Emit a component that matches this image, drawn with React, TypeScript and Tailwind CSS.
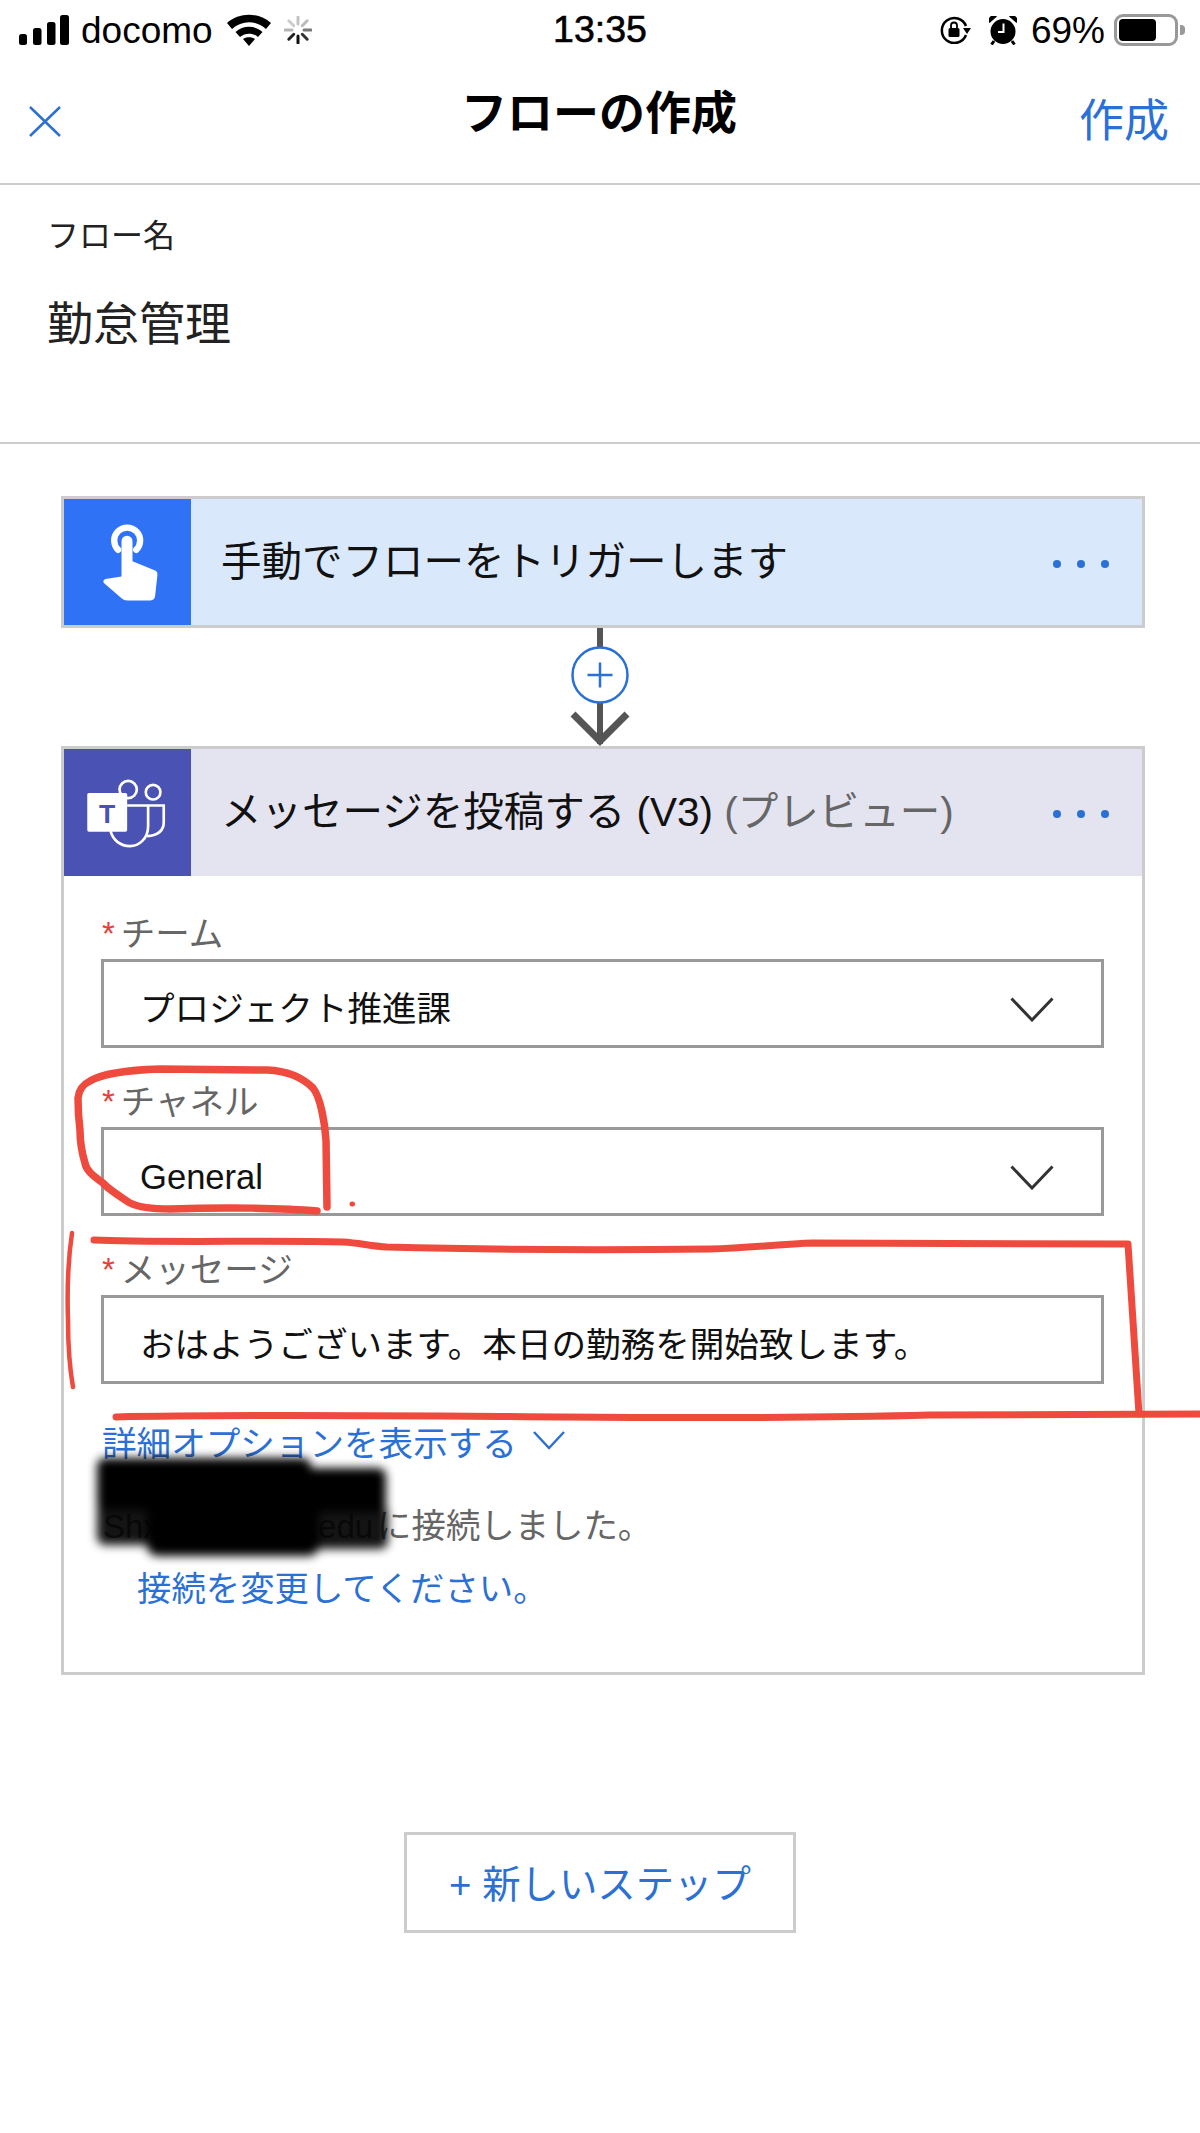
import type { ReactNode } from "react";

function Signal() {
  return (
    <svg width="50" height="31" viewBox="0 0 50 31" className="shrink-0">
      <rect x="0" y="19" width="8" height="11" rx="2.5" fill="#000" />
      <rect x="14" y="13" width="8.5" height="17" rx="2.5" fill="#000" />
      <rect x="28" y="7" width="8.5" height="23" rx="2.5" fill="#000" />
      <rect x="41" y="0" width="9" height="30" rx="2.5" fill="#000" />
    </svg>
  );
}

function Wifi() {
  return (
    <svg width="46" height="32" viewBox="0 0 46 32" className="shrink-0">
      <path d="M1 9 C13 -2 33 -2 45 9 L40 15 C30 6 16 6 6 15 Z" fill="#000" />
      <path d="M9.5 18 C17 11 29 11 36.5 18 L32 23 C27 18.500 19 18.500 14 23 Z" fill="#000" />
      <path d="M17 25 C20 22.500 26 22.500 29 25 L23 32 Z" fill="#000" />
    </svg>
  );
}

function Spinner() {
  const spokes = [
    { a: 0, c: "#c4c4c4" },
    { a: 45, c: "#bbb" },
    { a: 90, c: "#777" },
    { a: 135, c: "#333" },
    { a: 180, c: "#111" },
    { a: 225, c: "#222" },
    { a: 270, c: "#b5b5b5" },
    { a: 315, c: "#ccc" },
  ];
  return (
    <svg width="28" height="28" viewBox="-14 -14 28 28" className="ml-3 shrink-0">
      {spokes.map((s) => (
        <line key={s.a} x1="0" y1="-6" x2="0" y2="-13" stroke={s.c} strokeWidth="3" strokeLinecap="round" transform={`rotate(${s.a})`} />
      ))}
    </svg>
  );
}

function RotationLock() {
  return (
    <svg width="32" height="28" viewBox="0 0 32 28" className="shrink-0">
      <path d="M26 19 A12.500 12.500 0 1 1 26 10" fill="none" stroke="#000" strokeWidth="2.500" />
      <path d="M23 12 L31 12 L27 18 Z" fill="#000" />
      <rect x="8.500" y="12" width="11" height="9" rx="1.500" fill="#000" />
      <path d="M11 12 V9.500 a3 3 0 0 1 6 0 V12" fill="none" stroke="#000" strokeWidth="1.800" />
    </svg>
  );
}

function Alarm() {
  return (
    <svg width="28" height="29" viewBox="0 0 28 29" className="ml-[17px] shrink-0">
      <circle cx="14" cy="15.500" r="12.500" fill="#000" />
      <path d="M0.500 7 A5 5 0 0 1 8 0.500 Z M27.500 7 A5 5 0 0 0 20 0.500 Z" fill="#000" />
      <path d="M5 25 L2.500 28.500 M23 25 L25.500 28.500" stroke="#000" strokeWidth="3" />
      <path d="M14.500 7.500 V16 H9" fill="none" stroke="#fff" strokeWidth="2" />
    </svg>
  );
}

function HandIcon() {
  return (
    <svg width="127" height="127" viewBox="0 0 382 382">
      <path d="M163 153 A39 39 0 1 1 217 153" fill="none" stroke="#fff" strokeWidth="19" strokeLinecap="round" />
      <path d="M173 127 a16.500 16.500 0 0 1 33 0 V187 L276 216 Q282 220 281 228 L274 292 Q272 305 260 305 H190 Q180 305 174 299 L120 253 Q115 245 125 241 L173 233 Z" fill="#fff" />
    </svg>
  );
}

function TeamsIcon() {
  return (
    <svg width="127" height="127" viewBox="0 0 382 382">
      <circle cx="193" cy="122" r="26" fill="none" stroke="#fff" strokeWidth="8" />
      <circle cx="268" cy="130" r="22" fill="none" stroke="#fff" strokeWidth="8" />
      <path d="M190 170 H300 V220 Q300 258 250 262" fill="none" stroke="#fff" strokeWidth="8" />
      <path d="M253 170 V232 C253 270 225 292 198 292 C170 292 148 275 140 247" fill="none" stroke="#fff" strokeWidth="8" />
      <rect x="70" y="132" width="120" height="117" rx="5" fill="#fff" />
      <text x="130" y="222" textAnchor="middle" fontFamily="Liberation Sans" fontWeight="700" fontSize="80" fill="#4a52b3">T</text>
    </svg>
  );
}

function Dots() {
  return (
    <div className="mt-[3px] mr-[33px] ml-auto flex gap-[16px]">
      <span className="h-[8px] w-[8px] rounded-full bg-[#2b70d4]" />
      <span className="h-[8px] w-[8px] rounded-full bg-[#2b70d4]" />
      <span className="h-[8px] w-[8px] rounded-full bg-[#2b70d4]" />
    </div>
  );
}

function Field({ label, top, chevron, children }: { label: string; top: string; chevron?: boolean; children: ReactNode }) {
  return (
    <div>
      <div className={`flex items-end ${top}`}>
        <div className="flex h-[50px] items-center text-[34.500px] leading-[50px] text-[#666]">
          <span className="mr-[6px] ml-[1px] text-[33px] text-[#e5413a]">*</span>
          {label}
        </div>
      </div>
      <div className="flex h-[89px] items-center border-[3px] border-[#999] pt-[12px] pr-[47px] pl-[36px] text-[34.600px] text-[#111]">
        <span>{children}</span>
        {chevron && (
          <svg width="44" height="25" viewBox="0 0 44 25" className="ml-auto">
            <path d="M1.500 1.500 L22 23 L42.500 1.500" fill="none" stroke="#333" strokeWidth="3" />
          </svg>
        )}
      </div>
    </div>
  );
}

// Hand-drawn marks on top of the screenshot
function Annotations() {
  return (
    <svg width="1200" height="2133" viewBox="0 0 1200 2133" className="pointer-events-none absolute top-0 left-0">
      <defs>
        <filter id="smudge" x="-20%" y="-20%" width="140%" height="140%">
          <feGaussianBlur stdDeviation="5" />
        </filter>
      </defs>
      <g fill="none" stroke="#ee4b3e" strokeLinecap="round" strokeLinejoin="round">
        <path strokeWidth="7.500" d="M317 1211 C285 1208 225 1207 170 1209 C150 1209 138 1207 130 1203 C118 1195 108 1189 103 1183 C92 1175 86 1170 85 1163 C81 1150 80 1140 80 1130 C78 1115 78 1105 78 1098 C79 1088 84 1084 90 1081 C100 1075 125 1070 160 1069 L267 1070 C290 1071 305 1080 313 1088 C321 1098 325 1125 326 1140 L327 1207" />
        <path strokeWidth="5" d="M352 1204 L352.500 1204" />
        <path strokeWidth="4.500" d="M72 1233 C68 1260 67 1290 68 1320 C68 1350 70 1370 73 1387" />
        <path strokeWidth="7" d="M94 1240 C150 1243 280 1240 343 1242 C360 1243 370 1246 387 1247 C500 1250 620 1250 710 1249 C750 1248 780 1244 813 1243 L1128 1244 L1139 1414" />
        <path strokeWidth="7" d="M116 1417 C250 1414 420 1416 564 1417 C700 1418 820 1418 930 1415 L1200 1414" />
      </g>
      <g fill="#000" filter="url(#smudge)">
        <rect x="97" y="1458" width="214" height="52" rx="8" />
        <rect x="147" y="1472" width="172" height="84" rx="10" />
        <rect x="300" y="1468" width="86" height="44" rx="8" />
        <rect x="97" y="1500" width="56" height="45" rx="8" opacity="0.92" />
        <rect x="312" y="1505" width="76" height="44" rx="8" opacity="0.92" />
      </g>
    </svg>
  );
}

export default function App() {
  return (
    <div className="relative h-[2133px] w-[1200px] overflow-hidden bg-white font-['Liberation_Sans','Noto_Sans_CJK_JP',sans-serif]">
      {/* Status bar */}
      <div className="flex h-[60px] items-center pr-[15px] pl-[19px] text-black">
        <div className="flex flex-1 items-center">
          <Signal />
          <span className="ml-[12px] text-[37px] leading-none">docomo</span>
          <span className="ml-[13px]"><Wifi /></span>
          <Spinner />
        </div>
        <span className="mr-[4px] text-[37.500px] leading-none [-webkit-text-stroke:0.6px_#000]">13:35</span>
        <div className="flex flex-1 items-center justify-end">
          <RotationLock />
          <Alarm />
          <span className="ml-[14px] text-[37px] leading-none">69%</span>
          <div className="ml-[9px] h-[32px] w-[64px] rounded-[9px] border-[3px] border-[#999] p-[2px]">
            <div className="h-full w-[37px] rounded-[4px] bg-black" />
          </div>
          <div className="ml-[2px] h-[10px] w-[5px] rounded-r-[4px] bg-[#999]" />
        </div>
      </div>

      {/* Nav */}
      <div className="flex h-[125px] items-start border-b-2 border-[#ccc] pr-[31px] pl-[29px]">
        <div className="flex-1">
          <svg width="32" height="31" viewBox="0 0 32 31" className="mt-[46px]">
            <path d="M1 1 L31 30 M31 1 L1 30" stroke="#2b70d4" strokeWidth="2.500" fill="none" />
          </svg>
        </div>
        <div className="mt-[26px] text-center text-[46px] leading-[54px] font-bold text-black">フローの作成</div>
        <div className="mt-[35px] flex-1 text-right text-[45px] leading-[54px] text-[#2b70d4]">作成</div>
      </div>

      {/* Flow name */}
      <div className="h-[259px] border-b-2 border-[#ccc] pt-[27px] pl-[47px]">
        <div className="text-[32px] leading-[48px] text-[#222]">フロー名</div>
        <div className="mt-[36px] text-[46px] leading-[56px] text-[#222]">勤怠管理</div>
      </div>

      <div className="pt-[52px] pr-[55px] pl-[61px]">
        {/* Trigger card */}
        <div className="h-[132px] border-[3px] border-[#ccc]">
          <div className="flex h-full items-center bg-[#dae8fb]">
            <div className="h-full w-[127px] bg-[#3072f5]">
              <HandIcon />
            </div>
            <span className="ml-[30px] text-[40.500px] text-[#111]">手動でフローをトリガーします</span>
            <Dots />
          </div>
        </div>

        {/* Connector */}
        <svg width="60" height="118" viewBox="0 0 60 118" className="ml-[509px] block">
          <path d="M30 0 V116" stroke="#555" strokeWidth="6" />
          <circle cx="30" cy="47" r="27.500" fill="#fff" stroke="#2b70d4" strokeWidth="2.500" />
          <path d="M30 34.500 V59.500 M17.500 47 H42.500" stroke="#2b70d4" strokeWidth="2.500" />
          <path d="M3 86 L30 113 L57 86" fill="none" stroke="#555" strokeWidth="7" />
        </svg>

        {/* Teams action card */}
        <div className="h-[929px] border-[3px] border-[#ccc]">
          <div className="flex h-[127px] items-center bg-[#e4e4f1]">
            <div className="h-full w-[127px] bg-[#4a52b3]">
              <TeamsIcon />
            </div>
            <span className="ml-[30px] text-[40.500px] text-[#111]">
              メッセージを投稿する (V3) <span className="text-[#666]">(プレビュー)</span>
            </span>
            <Dots />
          </div>
          <div className="pr-[38px] pl-[37px]">
            <Field label="チーム" top="h-[83px]" chevron>プロジェクト推進課</Field>
            <Field label="チャネル" top="h-[79px]" chevron>General</Field>
            <Field label="メッセージ" top="h-[79px]">おはようございます。本日の勤務を開始致します。</Field>
            <div className="mt-[36px] flex h-[50px] items-center pl-[1px] text-[34.600px] text-[#2b70d4]">
              詳細オプションを表示する
              <svg width="32" height="19" viewBox="0 0 32 19" className="mb-[10px] ml-[16px]">
                <path d="M1 1 L16 17 L31 1" fill="none" stroke="#2b70d4" strokeWidth="2.500" />
              </svg>
            </div>
            <div className="mt-[32px] flex h-[50px] items-center pl-[2px] text-[34.400px] text-[#666]">
              <span className="mr-[4px] text-[33px]">Shxxxxx@xxx.edu</span>に接続しました。
            </div>
            <div className="mt-[13px] flex h-[50px] items-center pl-[36px] text-[34.400px] text-[#2b70d4]">接続を変更してください。</div>
          </div>
        </div>

        {/* New step */}
        <div className="mt-[157px] ml-[343px] flex h-[101px] w-[392px] items-center justify-center border-[3px] border-[#ccc] pt-[5px] text-[38.400px] text-[#2b70d4]">
          + 新しいステップ
        </div>
      </div>

      <Annotations />
    </div>
  );
}
